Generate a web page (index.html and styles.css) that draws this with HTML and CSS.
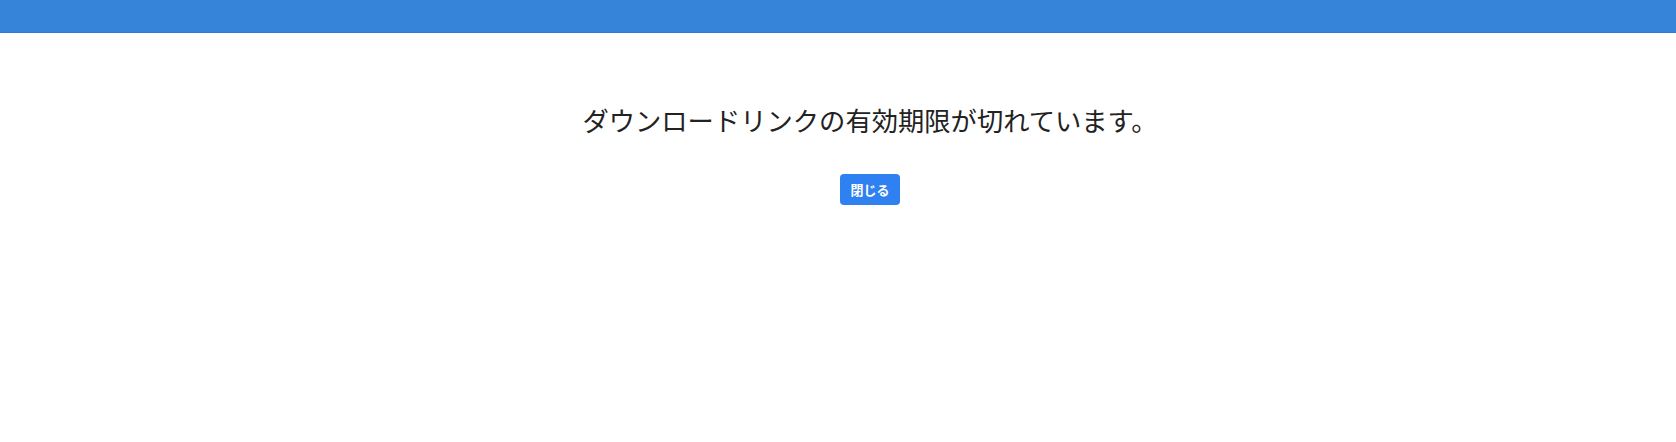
FILE: index.html
```html
<!DOCTYPE html>
<html lang="ja">
<head>
<meta charset="utf-8">
<link rel="stylesheet" href="styles.css">
</head>
<body>
<header class="topbar"></header>
<main class="content">
  <h1 class="message">ダウンロードリンクの有効期限が切れています。</h1>
  <button class="close-btn" type="button">閉じる</button>
</main>
</body>
</html>
```
FILE: styles.css
```css
html, body {
  margin: 0;
  padding: 0;
  background: #ffffff;
}
body {
  font-family: "Noto Sans CJK JP", "Noto Sans", sans-serif;
  color: #222222;
}
.topbar {
  height: 32px;
  background: #3584d9;
  border-bottom: 1px solid #2f7bcf;
}
.content {
  display: flex;
  flex-direction: column;
  align-items: center;
  padding-left: 64px;
  padding-top: 69px;
}
.message {
  margin: 0;
  font-size: 26.3px;
  font-weight: 400;
  line-height: 1.4;
}
.close-btn {
  margin-top: 35px;
  height: 31px;
  padding: 0 10px;
  border: none;
  border-radius: 4px;
  background: #2f80f0;
  color: #ffffff;
  font-family: "Noto Sans CJK JP", sans-serif;
  font-size: 13px;
  font-weight: 700;
}
```
